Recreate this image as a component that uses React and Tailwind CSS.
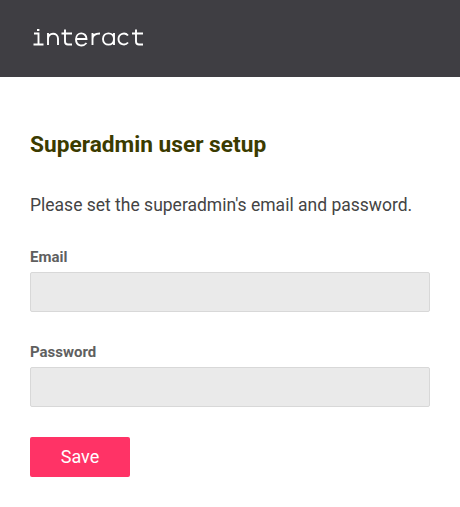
import React from 'react';

function Logo() {
  return (
    <svg width="112" height="20" viewBox="0 0 112 20" fill="none" stroke="#fff" strokeWidth="1.9" className="block">
      {/* i */}
      <path d="M2 4.500h4.500v11M1.500 15.500h10M5 1h2.400" />
      {/* n */}
      <path d="M16 16V4M16 10c0-7 10-7 10-.5V16" />
      {/* t */}
      <path d="M33 0.500v12c0 2 1 3 3 3h4M29.500 4.500h10.500" />
      {/* e */}
      <path d="M44 10h10.500c0-7.500-10.500-7.500-10.500.3s7.500 7.200 10.500 3.700" />
      {/* r */}
      <path d="M60.500 16V4M60.500 10c0-4 3-5.500 7.500-5.500" />
      {/* a */}
      <path d="M82 4V16M82 10c0-7.500-11-7.500-11 0s11 7.500 11 0" />
      {/* c */}
      <path d="M96 6.500c-3-3.500-9.500-2-9.500 3.500s6.500 7 9.500 3.500" />
      {/* t */}
      <path d="M104 0.500v12c0 2 1 3 3 3h4M100 4.500h11" />
    </svg>
  );
}

function Field({ label, type }) {
  return (
    <div>
      <label className="block text-[15px] leading-[20px] font-bold text-[#5f5f5f] mb-[5px]">{label}</label>
      <input type={type} className="block w-full h-[40px] bg-[#eaeaea] border border-[#d8d8d8] rounded-[2px]" />
    </div>
  );
}

export default function App() {
  return (
    <div className="min-h-[507px] bg-white font-['Roboto',sans-serif]">
      <div className="h-[77px] bg-[#3f3e43] flex items-center pl-[32px]">
        <Logo />
      </div>
      <div className="px-[30px] pt-[53px]">
        <h1 className="text-[22.700px] leading-[30px] font-bold text-[#3b3b00]">Superadmin user setup</h1>
        <p className="mt-[32px] text-[17.500px] leading-[26px] text-[#444444]">Please set the superadmin's email and password.</p>
        <div className="mt-[29px] flex flex-col gap-[30px]">
          <Field label="Email" type="email" />
          <Field label="Password" type="password" />
        </div>
        <button className="mt-[30px] block w-[100px] h-[40px] pb-[2px] bg-[#ff3366] text-white text-[18px] rounded-[2px]">Save</button>
      </div>
    </div>
  );
}
